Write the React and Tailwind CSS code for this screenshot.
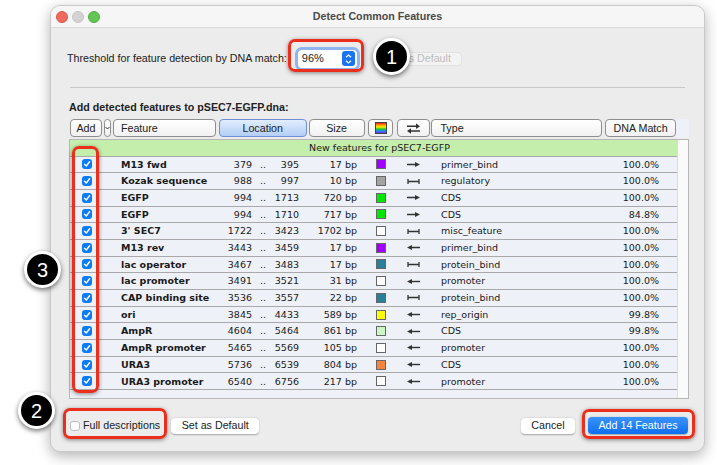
import React from 'react'

const rows = [
  ['M13 fwd', '379', '395', '17 bp', 'bg-[#a000ff]', 'r', 'primer_bind', '100.0%'],
  ['Kozak sequence', '988', '997', '10 bp', 'bg-[#a3a3a3]', 'b', 'regulatory', '100.0%'],
  ['EGFP', '994', '1713', '720 bp', 'bg-[#00e600]', 'r', 'CDS', '100.0%'],
  ['EGFP', '994', '1710', '717 bp', 'bg-[#00e600]', 'r', 'CDS', '84.8%'],
  ["3' SEC7", '1722', '3423', '1702 bp', 'bg-white', 'b', 'misc_feature', '100.0%'],
  ['M13 rev', '3443', '3459', '17 bp', 'bg-[#a000ff]', 'l', 'primer_bind', '100.0%'],
  ['lac operator', '3467', '3483', '17 bp', 'bg-[#2a7f9a]', 'b', 'protein_bind', '100.0%'],
  ['lac promoter', '3491', '3521', '31 bp', 'bg-white', 'l', 'promoter', '100.0%'],
  ['CAP binding site', '3536', '3557', '22 bp', 'bg-[#2a7f9a]', 'b', 'protein_bind', '100.0%'],
  ['ori', '3845', '4433', '589 bp', 'bg-[#ffff00]', 'l', 'rep_origin', '99.8%'],
  ['AmpR', '4604', '5464', '861 bp', 'bg-[#ccf7c4]', 'l', 'CDS', '99.8%'],
  ['AmpR promoter', '5465', '5569', '105 bp', 'bg-white', 'l', 'promoter', '100.0%'],
  ['URA3', '5736', '6539', '804 bp', 'bg-[#f5843f]', 'l', 'CDS', '100.0%'],
  ['URA3 promoter', '6540', '6756', '217 bp', 'bg-white', 'l', 'promoter', '100.0%'],
]

function Arrow({ dir }) {
  if (dir === 'b') return (
    <svg width="13" height="7" viewBox="0 0 13 7">
      <path d="M1 3.5H12M1 1V6M12 1V6" stroke="#333" strokeWidth="1.3" fill="none" />
    </svg>
  )
  return (
    <svg width="13" height="7" viewBox="0 0 13 7" className={dir === 'l' ? '-scale-x-100' : ''}>
      <path d="M0 3.5H9" stroke="#333" strokeWidth="1.4" />
      <path d="M8 1L13 3.5L8 6Z" fill="#333" />
    </svg>
  )
}

function BlueCheck() {
  return (
    <div className="flex h-[10px] w-[10px] items-center justify-center rounded-[3px] bg-[#0b7cf7]">
      <svg width="8" height="8" viewBox="0 0 8 8">
        <path d="M1.5 4.2L3.3 6L6.6 1.8" stroke="white" strokeWidth="1.4" fill="none" strokeLinecap="round" strokeLinejoin="round" />
      </svg>
    </div>
  )
}

function Row({ r }) {
  const [name, s, e, size, color, dir, type, match] = r
  return (
    <div className="flex h-[16.7px] items-center border-b border-[#a9a9a9] leading-none whitespace-nowrap">
      <div className="flex w-[34px] justify-center"><BlueCheck /></div>
      <div className="ml-[17px] w-[100px] font-bold">{name}</div>
      <div className="w-[31px] text-right">{s}</div>
      <div className="w-[22px] text-center">..</div>
      <div className="w-[25px] text-right">{e}</div>
      <div className="w-[58px] text-right">{size}</div>
      <div className={`ml-[19px] h-[10px] w-[10px] border border-[#666] ${color}`} />
      <div className="ml-[21px] flex w-[13px]"><Arrow dir={dir} /></div>
      <div className="ml-[21px] w-[149px]">{type}</div>
      <div className="w-[69px] text-right">{match}</div>
    </div>
  )
}

const hdrBtn = 'flex h-[18px] items-center rounded-[4px] border border-[#8e8e8e] bg-linear-to-b from-white to-[#f1f1f1] text-[10.7px] text-[#222]'

function Badge({ n, className }) {
  return (
    <div className={`absolute flex h-[37px] w-[37px] items-center justify-center rounded-full border-[3px] border-white bg-black text-[20px] text-white shadow-[0_2px_5px_rgba(0,0,0,0.55)] ${className}`}>
      {n}
    </div>
  )
}

const redBox = 'absolute rounded-[7px] border-[3px] border-[#ec2f1c] shadow-[0_1px_4px_rgba(0,0,0,0.45)]'

export default function App() {
  return (
    <div className="relative h-[465px] w-[717px] overflow-hidden bg-white pl-[50px] pt-[5px] font-['Liberation_Sans',Arial,sans-serif] text-[#222]">
      <div className="flex h-[447px] w-[655px] flex-col overflow-hidden rounded-[10px] border border-[#c9c9c9] bg-[#ececec] shadow-[0_4px_14px_rgba(0,0,0,0.3)]">
        {/* title bar */}
        <div className="relative flex h-[22px] shrink-0 items-center justify-center border-b border-[#dadada] bg-[#f6f6f6]">
          <div className="absolute left-[5px] top-[5px] flex gap-[4px]">
            <div className="h-[12px] w-[12px] rounded-full border border-[#d8544a] bg-[#ee6a5f]" />
            <div className="h-[12px] w-[12px] rounded-full border border-[#c6c6c6] bg-[#d3d3d3]" />
            <div className="h-[12px] w-[12px] rounded-full border border-[#52a842] bg-[#62c655]" />
          </div>
          <span className="text-[10.7px] font-bold text-[#4a4a4a]">Detect Common Features</span>
        </div>

        {/* threshold */}
        <div className="ml-[16px] mt-[19px] flex h-[23px] items-center text-[10.7px]">
          <span>Threshold for feature detection by DNA match:</span>
          <div className="ml-[11px] flex h-[18px] w-[59px] items-center justify-between rounded-[4px] bg-white pl-[4px] pr-[2px] shadow-[0_0_0_3px_#8fb4f0]">
            <span className="text-[11px]">96%</span>
            <div className="flex h-[15px] w-[13px] flex-col items-center justify-center gap-[2px] rounded-[3px] bg-[#1a73f0]">
              <svg width="7" height="4" viewBox="0 0 7 4"><path d="M1 3.3L3.5 1L6 3.3" stroke="white" strokeWidth="1.2" fill="none" /></svg>
              <svg width="7" height="4" viewBox="0 0 7 4"><path d="M1 0.7L3.5 3L6 0.7" stroke="white" strokeWidth="1.2" fill="none" /></svg>
            </div>
          </div>
          <div className="ml-[16px] flex h-[14px] w-[89px] items-center justify-center rounded-[4px] border border-[#e2e2e2] bg-[#f3f3f3] text-[#bdbdbd]">
            Set as Default
          </div>
        </div>

        <div className="mx-[19px] mt-[17px] h-px shrink-0 bg-[#c7c7c7]" />

        <div className="ml-[18px] mt-[12px] h-[14px] text-[10.7px] font-bold leading-[14px]">Add detected features to pSEC7-EGFP.dna:</div>

        {/* header buttons */}
        <div className="ml-[19px] mr-[15px] mt-[5px] flex h-[18px] shrink-0">
          <div className={`${hdrBtn} w-[32px] justify-center`}>Add</div>
          <div className={`${hdrBtn} ml-[2px] w-[7px] justify-center`}>
            <svg width="5" height="4" viewBox="0 0 5 4"><path d="M0.5 1L2.5 3L4.5 1" stroke="#333" strokeWidth="1" fill="none" /></svg>
          </div>
          <div className={`${hdrBtn} ml-[2px] w-[103px] pl-[7px]`}>Feature</div>
          <div className="ml-[3px] flex h-[18px] w-[88px] items-center justify-center rounded-[4px] border border-[#6f8fd6] bg-linear-to-b from-[#e2edfd] to-[#b3cef6] text-[10.7px] text-[#222]">Location</div>
          <div className={`${hdrBtn} ml-[2px] w-[56px] justify-center`}>Size</div>
          <div className={`${hdrBtn} ml-[3px] w-[26px] justify-center`}>
            <div className="h-[12px] w-[12px] border border-[#444] bg-[linear-gradient(to_bottom,#ff1a1a,#ff9900,#ffee00,#22cc22,#1a88ff,#7a2cff)]" />
          </div>
          <div className={`${hdrBtn} ml-[4px] w-[33px] justify-center`}>
            <svg width="15" height="11" viewBox="0 0 15 11">
              <path d="M1 3.2H12" stroke="#333" strokeWidth="1.4" />
              <path d="M10 0.5L14 3.2L10 5.9Z" fill="#333" />
              <path d="M3 8H14" stroke="#333" strokeWidth="1.4" />
              <path d="M5 5.3L1 8L5 10.7Z" fill="#333" />
            </svg>
          </div>
          <div className={`${hdrBtn} ml-[1px] w-[171px] pl-[8px]`}>Type</div>
          <div className={`${hdrBtn} ml-[3px] w-[71px] justify-center`}>DNA Match</div>
          <div className="ml-auto h-[19px] w-[13px] bg-[#eef1f7]" />
        </div>

        {/* table */}
        <div className="mx-[15px] ml-[18px] mt-[2px] flex h-[260px] shrink-0 border border-[#b7b7b7] bg-[#eef1f8] font-['DejaVu_Sans',Verdana,sans-serif] text-[9.5px] text-[#1a1a1a]">
          <div className="flex w-[607px] flex-col">
            <div className="flex h-[16.5px] shrink-0 items-center justify-center border-b border-[#a9a9a9] bg-[#c4eeab] pl-[12px] leading-none">
              New features for pSEC7-EGFP
            </div>
            {rows.map((r, i) => <Row key={i} r={r} />)}
          </div>
          <div className="flex-1 border-l border-[#dcdcdc] bg-[#fafafa]" />
        </div>

        {/* bottom */}
        <div className="ml-[19px] mr-[16px] mt-[18px] flex h-[17px] items-center text-[10.7px]">
          <div className="h-[10px] w-[10px] rounded-[3px] border border-[#bdbdbd] bg-white" />
          <span className="ml-[3px]">Full descriptions</span>
          <div className="ml-[11px] flex h-[16px] w-[88px] items-center justify-center rounded-[4px] bg-white shadow-[0_0.5px_1.5px_rgba(0,0,0,0.3)]">Set as Default</div>
          <div className="ml-auto flex h-[16px] w-[54px] items-center justify-center rounded-[4px] bg-white shadow-[0_0.5px_1.5px_rgba(0,0,0,0.3)]">Cancel</div>
          <div className="ml-[13px] flex h-[17px] w-[100px] items-center justify-center rounded-[4px] bg-linear-to-b from-[#3b93f9] to-[#0a6ef0] text-white shadow-[0_0.5px_1.5px_rgba(0,0,0,0.3)]">Add 14 Features</div>
        </div>
      </div>

      {/* annotations */}
      <div className={`${redBox} left-[288px] top-[39px] h-[33px] w-[76px]`} />
      <div className={`${redBox} left-[72px] top-[146px] h-[247px] w-[27px]`} />
      <div className={`${redBox} left-[63px] top-[408px] h-[31px] w-[104px]`} />
      <div className={`${redBox} left-[582px] top-[409px] h-[30px] w-[113px]`} />
      <Badge n="1" className="left-[373px] top-[38px]" />
      <Badge n="3" className="left-[24px] top-[251px]" />
      <Badge n="2" className="left-[18px] top-[392px]" />
    </div>
  )
}
